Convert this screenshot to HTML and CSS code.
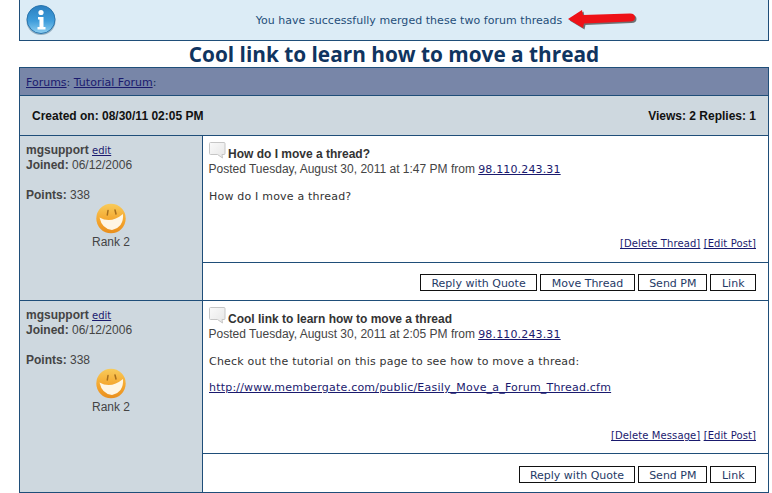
FILE: index.html
```html
<!DOCTYPE html>
<html lang="en">
<head>
<meta charset="utf-8">
<title>Cool link to learn how to move a thread</title>
<link rel="stylesheet" href="styles.css">
</head>
<body>
<div class="page">
  <div class="notice">
    <svg class="info-icon" width="30" height="30" viewBox="0 0 30 30">
      <defs>
        <linearGradient id="ig" x1="0" y1="0" x2="0" y2="1"><stop offset="0" stop-color="#2a7fc0"/><stop offset="0.55" stop-color="#3f9ddb"/><stop offset="1" stop-color="#8fd0f2"/></linearGradient>
      </defs>
      <ellipse cx="15" cy="16" rx="14.5" ry="14" fill="#5d7f96" opacity=".55"/>
      <circle cx="15" cy="14.5" r="14" fill="url(#ig)" stroke="#2b75ad" stroke-width="1"/>
      <circle cx="15" cy="7.5" r="2.6" fill="#fff"/>
      <path d="M12 12h5.500v10h2v2.500h-8V22h2v-7.500h-1.500z" fill="#fff"/>
    </svg>
    <span class="notice-text">You have successfully merged these two forum threads</span>
    <svg class="arrow" width="72" height="24" viewBox="0 0 72 24">
      <path d="M2 11 L16 2 L17 7 L64 5.500 Q69 5.500 69 9.500 Q69 13.500 64 13.500 L18 15.500 L17 20 Z" fill="#332f2c" opacity=".65" transform="translate(1.5 1.5)"/>
      <path d="M2 11 L16 2 L17 7 L64 5.500 Q69 5.500 69 9.500 Q69 13.500 64 13.500 L18 15.500 L17 20 Z" fill="#ee1117"/>
    </svg>
  </div>
  <h1 class="title">Cool link to learn how to move a thread</h1>
  <div class="board">
    <div class="crumbs"><a href="#">Forums</a>: <a href="#">Tutorial Forum</a>:</div>
    <div class="meta"><span>Created on: 08/30/11 02:05 PM</span><span>Views: 2 Replies: 1</span></div>

    <div class="post post-one">
      <div class="author">
        <div><b>mgsupport</b> <a class="edit" href="#">edit</a></div>
        <div><b>Joined:</b> 06/12/2006</div>
        <div class="points"><b>Points:</b> 338</div>
        <svg class="rank-icon" width="32" height="32" viewBox="0 0 32 32">
          <defs>
            <linearGradient id="sg" x1="0" y1="0" x2="0" y2="1"><stop offset="0" stop-color="#f8cb5a"/><stop offset="0.6" stop-color="#f4a42c"/><stop offset="1" stop-color="#e98f1e"/></linearGradient>
            <g id="smile">
              <circle cx="16" cy="15.500" r="14.700" fill="url(#sg)"/>
              <path d="M4.500 14.500 Q16 21 28 11 Q29 24 17 27 Q7 26 4.500 14.500Z" fill="#fff6e4"/>
              <path d="M13 7.500 L12.300 12" stroke="#a66e1c" stroke-width="1.500" stroke-linecap="round"/>
              <path d="M20 7 L21 11" stroke="#a66e1c" stroke-width="1.500" stroke-linecap="round"/>
            </g>
            <linearGradient id="bg" x1="0" y1="0" x2="1" y2="1"><stop offset="0" stop-color="#fafafa"/><stop offset="1" stop-color="#e6e6e6"/></linearGradient>
            <g id="bubble">
              <path d="M1.500 0.500h13.500a1 1 0 0 1 1 1v10a1 1 0 0 1-1 1h-2l.5 3.500-5-3.500h-7a1 1 0 0 1-1-1v-10a1 1 0 0 1 1-1z" fill="url(#bg)" stroke="#c6c6c6"/>
            </g>
          </defs>
          <use href="#smile"/>
        </svg>
        <div class="rank">Rank 2</div>
      </div>
      <div class="body">
        <div class="content">
          <div class="subject">
            <svg class="bubble" width="17" height="17" viewBox="0 0 17 17"><use href="#bubble"/></svg>
            <b>How do I move a thread?</b>
          </div>
          <div class="posted">Posted Tuesday, August 30, 2011 at 1:47 PM from <a href="#">98.110.243.31</a></div>
          <p class="msg">How do I move a thread?</p>
          <div class="mod"><a href="#">[Delete Thread]</a> <a href="#">[Edit Post]</a></div>
        </div>
        <div class="actions">
          <a class="btn" href="#">Reply with Quote</a>
          <a class="btn btn-wide" href="#">Move Thread</a>
          <a class="btn" href="#">Send PM</a>
          <a class="btn btn-last" href="#">Link</a>
        </div>
      </div>
    </div>

    <div class="post post-two">
      <div class="author">
        <div><b>mgsupport</b> <a class="edit" href="#">edit</a></div>
        <div><b>Joined:</b> 06/12/2006</div>
        <div class="points"><b>Points:</b> 338</div>
        <svg class="rank-icon" width="32" height="32" viewBox="0 0 32 32"><use href="#smile"/></svg>
        <div class="rank">Rank 2</div>
      </div>
      <div class="body">
        <div class="content">
          <div class="subject">
            <svg class="bubble" width="17" height="17" viewBox="0 0 17 17"><use href="#bubble"/></svg>
            <b>Cool link to learn how to move a thread</b>
          </div>
          <div class="posted">Posted Tuesday, August 30, 2011 at 2:05 PM from <a href="#">98.110.243.31</a></div>
          <p class="msg">Check out the tutorial on this page to see how to move a thread:</p>
          <p class="msg link-line"><a href="#">http://www.membergate.com/public/Easily_Move_a_Forum_Thread.cfm</a></p>
          <div class="mod"><a href="#">[Delete Message]</a> <a href="#">[Edit Post]</a></div>
        </div>
        <div class="actions">
          <a class="btn" href="#">Reply with Quote</a>
          <a class="btn" href="#">Send PM</a>
          <a class="btn btn-last" href="#">Link</a>
        </div>
      </div>
    </div>
  </div>
</div>
</body>
</html>
```

FILE: styles.css
```css
* { box-sizing: border-box; }
html, body { margin: 0; padding: 0; background: #fff; }
body { font-family: "DejaVu Sans", Verdana, sans-serif; font-size: 11px; color: #333; overflow: hidden; }
a { color: #1a1a6e; text-decoration: underline; }
.page { width: 750px; margin-left: 19px; }

.notice {
  height: 41px;
  background: #dcecf6;
  border: 1px solid #1f4e79;
  border-top: 0;
  display: flex;
  align-items: center;
  justify-content: center;
  padding-left: 30px;
  position: relative;
  color: #1f4e79;
  letter-spacing: .04px;
}
.info-icon { position: absolute; left: 6px; top: 5px; }
.arrow { position: absolute; left: 546px; top: 8px; }

.title {
  margin: 0;
  height: 26px;
  line-height: 26px;
  text-align: center;
  font-family: "Open Sans", sans-serif;
  font-size: 20.8px;
  font-weight: 700;
  color: #0f3460;
}

.board { border: 1px solid #1f4e79; border-top: 0; }
.crumbs {
  height: 29px;
  background: #7886a8;
  border-top: 1px solid #1f4e79;
  border-bottom: 1px solid #1f4e79;
  padding: 8px 6px 0;
  color: #14284f;
}
.meta {
  height: 40px;
  background: #ced8df;
  border-bottom: 1px solid #1f4e79;
  padding: 0 12px;
  display: flex;
  align-items: center;
  justify-content: space-between;
  font-family: "Liberation Sans", Arial, sans-serif;
  font-size: 12px;
  font-weight: 700;
  color: #111;
}

.post { display: grid; grid-template-columns: 183px 1fr; }
.post-one { height: 165px; border-bottom: 1px solid #1f4e79; }
.post-two { height: 191px; }

.author {
  background: #ced8df;
  border-right: 1px solid #1f4e79;
  padding: 7px 6px 0;
  font-family: "Liberation Sans", Arial, sans-serif;
  font-size: 12px;
  line-height: 15px;
  color: #444;
}
.edit { font-family: "DejaVu Sans", Verdana, sans-serif; font-size: 10px; }
.points { margin-top: 15px; }
.rank-icon { display: block; margin: 0 auto; }
.rank { text-align: center; }

.body { display: flex; flex-direction: column; min-width: 0; }
.content { flex: 1; display: flex; flex-direction: column; padding: 6px 12px 0 5px; }
.subject { font-family: "Liberation Sans", Arial, sans-serif; font-size: 12px; display: flex; align-items: flex-end; gap: 2px; color: #333; height: 19px; }
.bubble { flex: none; margin: 0 0 2px 1px; }
.posted { font-family: "Liberation Sans", Arial, sans-serif; font-size: 12px; line-height: 16px; color: #444; padding-left: .5px; }
.posted a { font-family: "DejaVu Sans", Verdana, sans-serif; font-size: 11px; letter-spacing: .15px; }
.msg { margin: 12px 0 0 1px; line-height: 14px; letter-spacing: .2px; }
.link-line { margin-top: 12px; }
.mod { margin-top: auto; margin-bottom: 12px; text-align: right; font-size: 10px; line-height: 13px; letter-spacing: .1px; }
.post-two .mod { margin-bottom: 11px; }

.actions {
  height: 38px;
  border-top: 1px solid #1f4e79;
  display: flex;
  justify-content: flex-end;
  align-items: flex-start;
  gap: 3px;
  padding: 11px 12px 0 0;
}
.post-two .actions { height: 39px; padding-top: 12px; }
.btn {
  display: block;
  height: 17px;
  line-height: 17px;
  padding: 0 10px;
  border: 1px solid #111;
  background: #fff;
  color: #1f3a66;
  text-decoration: none;
}
.btn-wide { padding: 0 11px; }
.btn-last { padding: 0 10.5px; }
```
